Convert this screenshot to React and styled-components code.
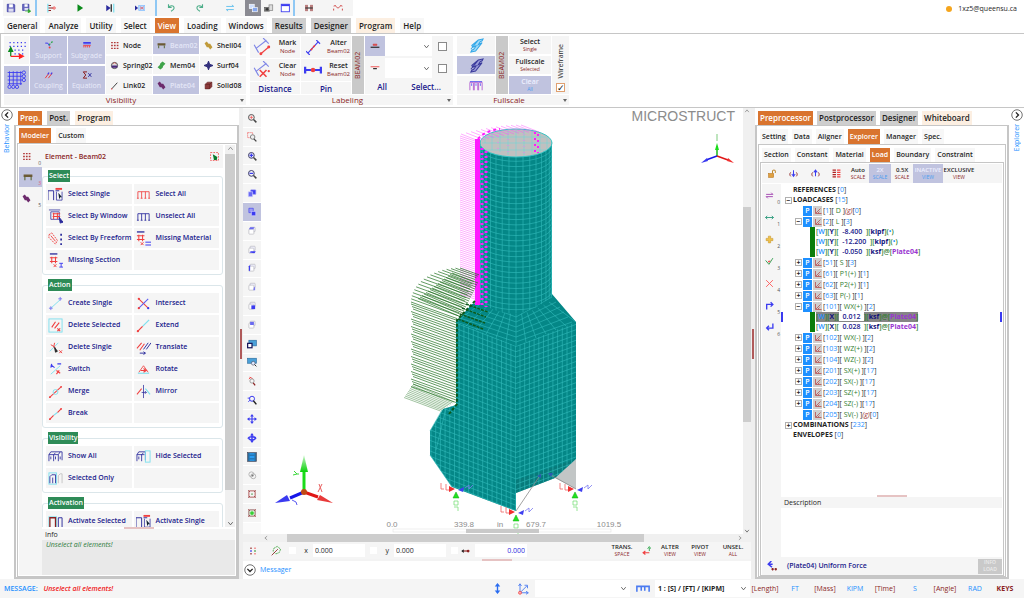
import React, { useState } from 'react'
import styled, { createGlobalStyle, css } from 'styled-components';

const GlobalStyle = createGlobalStyle`
    :root{
        --ink: #1f1f1f;
        --navy: #1a1a8c;
        --brown: #8b1f1f;
        --blue: #1e90ff;
        --orange: #d9742f;
        --lavender: #c0c3df;
        --panel: #f5f5f5;
        --line: #c6c6c6;
        --green: #2e8b57;
    }
    *{
        box-sizing: border-box;
    }
    body{
        margin: 0;
        background: #fff;
        color: var(--ink);
        font-family: "Open Sans", "Noto Sans", sans-serif;
        font-size: 7px;
        line-height: 10px;
    }
    button, input, select{
        font: inherit;
        color: inherit;
        border: 0;
        margin: 0;
        padding: 0;
        background: none;
        border-radius: 0;
        min-width: 0;
    }
    button{
        cursor: pointer;
        white-space: nowrap;
    }
    svg{
        display: block;
        flex: none;
    }
`

/* ---------- icons, all on a 16 x 16 grid ---------- */

const R = '#f04040'
const B = '#3c3cf0'
const N = '#2a2a9c'
const C = '#7fe0ee'
const D = '#8b2020'
const G = '#8a8a8a'

const pair = (back, front) => (
    <>
        <rect x="5" y="2" width="8" height="7" rx="1" fill="#f2f2ff" stroke={back} />
        <rect x="3" y="5" width="8" height="8" rx="1" fill="#fff" stroke={back} />
        {front}
    </>
)
const lens = (color = G) => (
    <>
        <circle cx="7" cy="7" r="4.6" stroke={color} strokeWidth="1.6" />
        <path d="M10.5 10.5L15 15" stroke="#444" strokeWidth="2.4" />
    </>
)

const drawings = {
    save: <><path d="M2 2H13L14 3V14H2Z" fill="#6a6ac0" stroke={N} /><rect x="5" y="2" width="6" height="5" fill="#fff" stroke="none" /><rect x="4" y="9" width="8" height="5" fill="#dcdcf0" stroke="none" /></>,
    saveAs: <><path d="M1 2H11V12H1Z" fill="#6a6ac0" stroke={N} /><rect x="4" y="2" width="5" height="4" fill="#fff" stroke="none" /><rect x="4" y="8" width="6" height="4" fill="#dcdcf0" stroke="none" /><path d="M5 13H13M10 10L14 13L10 16Z" fill="#2aa62a" stroke="#2aa62a" /></>,
    branch: <><path d="M3 1V15" stroke={C} strokeWidth="2" /><path d="M4 4H8M4 8H14M4 12H8" stroke={D} strokeWidth="1.6" /><circle cx="13" cy="8" r="2" fill="#f3b8b8" stroke={R} /></>,
    play: <path d="M4 2L13 8L4 14Z" fill="#0a8a1a" stroke="none" />,
    step: <><path d="M2 3L9 8L2 13Z" fill={N} stroke="none" /><path d="M10 2V14" stroke="#222" strokeWidth="2" /><path d="M14 1V15" stroke={C} strokeWidth="2" /></>,
    stepBox: <><path d="M0 4L5 8L0 12Z" fill={N} stroke="none" /><rect x="6" y="4" width="10" height="8" fill="#b8dcff" stroke="#79b8ff" /><path d="M8 6L14 10M14 6L8 10" stroke={R} /></>,
    undo: <path d="M4 2V7H9M4 7C7 3 13 4 13 8C13 11 10 12 8 13" stroke="#4fae8a" strokeWidth="1.8" />,
    redo: <path d="M12 2V7H7M12 7C9 3 3 4 3 8C3 11 6 12 8 13" stroke="#4fae8a" strokeWidth="1.8" />,
    swap: <path d="M2 5.5H14L11 3M14 10.5H2L5 13" stroke="#6cc4ee" strokeWidth="1.6" />,
    screens: <><rect x="2" y="2" width="8" height="7" fill="#cfe0ff" stroke="#fff" /><rect x="7" y="7" width="8" height="7" fill="#86a8f0" stroke="#fff" /></>,
    printer: <><rect x="1" y="7" width="8" height="6" fill="#777" stroke="#555" /><rect x="8" y="3" width="6" height="9" fill="#ddd" stroke="#777" /><circle cx="5" cy="10" r="2" fill="#333" stroke="none" /></>,
    windowBox: <><rect x="2" y="2" width="13" height="12" fill="#fff" stroke={B} strokeWidth="1.4" /><rect x="2" y="2" width="13" height="3" fill={B} stroke="none" /></>,
    truss: <><path d="M3 13V3M5 13V3M11 13V3M13 13V3" stroke={D} strokeWidth="1.4" /><path d="M2 8H14" stroke="#333" strokeWidth="1.8" /></>,
    hanger: <path d="M1 12V9M15 12V9M1 5L4 4M15 5L12 4M4 4C6 9 10 9 12 4" stroke="#d24b4b" strokeWidth="1.6" />,

    axisGrid: <><path d="M2 2H15M2 5H15M6 8H15M6 11H15" stroke={B} strokeDasharray="1 2" /><path d="M3 13V8M1.5 9L3 6L4.5 9Z" stroke="#0b8a1e" fill="#0b8a1e" /><path d="M3 13H11M10 11.5L13 13L10 14.500Z" stroke="#ff2020" fill="#ff2020" /></>,
    grid: <><path d="M2 1V12M5 1V12M8 1V12M11 1V12M0.5 2H12M0.5 5H12M0.5 8H12M0.5 11H12" stroke={B} strokeWidth="0.7" /><g stroke={B} strokeWidth="0.7"><circle cx="13.5" cy="2" r="1.3" /><circle cx="13.5" cy="5" r="1.3" /><circle cx="13.5" cy="8" r="1.3" /><circle cx="2" cy="13.5" r="1.3" /><circle cx="5" cy="13.5" r="1.3" /><circle cx="8" cy="13.5" r="1.3" /></g></>,
    support: <><path d="M2 5H6L9 10" stroke={B} strokeWidth="1.6" /><path d="M8 8L14 2" stroke="#2aa64a" strokeWidth="2" strokeDasharray="3 2" /><circle cx="9" cy="12" r="1.6" fill={R} stroke="none" /></>,
    subgrade: <><path d="M2 4H14M2 6H14" stroke={B} strokeWidth="1.6" /><path d="M2 9H14M3 9V12M6 9V12M9 9V12M12 9V12" stroke={R} strokeWidth="1.4" /></>,
    coupling: <><path d="M2 13L8 5M7 13L13 5" stroke={R} strokeWidth="1.6" /><path d="M6 7L8 4M11 7L13 4" stroke={B} strokeWidth="1.8" /></>,
    equation: <><path d="M8 3H2L6 8L2 13H8" stroke={D} strokeWidth="1.6" /><path d="M10 5L15 11M15 5L10 11" stroke={N} strokeWidth="1.4" /></>,
    dots: <path d="M2 3H5M7 3H10M12 3H15M2 8H5M7 8H10M12 8H15M2 13H5M7 13H10M12 13H15" stroke="#b23a3a" strokeWidth="2.4" />,
    spring: <><circle cx="8" cy="8" r="5.5" fill="#ddd" stroke="#444" strokeWidth="1.6" /><path d="M3 8H13V12H3Z" fill="#4b2a7c" stroke="none" /><path d="M5 5L8 3L11 5" stroke={R} /></>,
    link: <><path d="M3 14L13 3" stroke="#222" strokeWidth="1.5" /><circle cx="3" cy="14" r="1.2" fill={R} stroke="none" /></>,
    beam: <><rect x="1" y="4" width="14" height="4" fill="#6b5a34" stroke="none" /><path d="M3 8V13M13 8V13" stroke="#5a6a3a" strokeWidth="1.8" /></>,
    mem: <path d="M1 11L5 7L6 4L10 1L15 5L11 9L10 12L6 15Z" fill="#3fa34a" stroke="none" />,
    plate: <path d="M1 4L5 1L8 5L11 5L15 11L11 15L8 11L5 11Z" fill="#6c2a6c" stroke="none" />,
    shell: <path d="M1 4L5 1L8 5L11 5L15 11L11 15L8 11L5 11Z" fill="#c09a3a" stroke="none" />,
    surf: <path d="M8 1L10 6L15 8L10 10L8 15L6 10L1 8L6 6Z" fill="#33307c" stroke="#33307c" strokeWidth="2" />,
    solid: <><path d="M2 6L6 2H14V10L10 14H2Z" fill="#8b3a3a" stroke="#5c1d1d" /><path d="M2 6H10V14M10 6L14 2" stroke="#5c1d1d" /></>,
    mark: <><path d="M1 6L5 13M3 9L12 2M9 0L14 5" stroke="#7f86e6" /><path d="M7 14L14 8" stroke={R} /><circle cx="7" cy="14" r="1.3" fill={R} /><circle cx="14" cy="8" r="1.3" fill={R} /></>,
    clear: <><path d="M1 6L5 13M3 9L12 2M9 0L14 5" stroke="#7f86e6" /><path d="M6 8L12 14M12 8L6 14" stroke={R} strokeWidth="1.4" /><circle cx="14" cy="9" r="1" fill={R} /></>,
    alter: <><path d="M2 14L13 2M0 12L4 16M11 0L15 4" stroke={B} strokeWidth="1.2" /><path d="M5 11L10 5" stroke={R} strokeWidth="1.6" strokeDasharray="3 1" /></>,
    reset: <><path d="M0 8H16" stroke={B} strokeWidth="1.8" /><path d="M1 5V11M15 5V11" stroke={B} strokeWidth="2" /><circle cx="8" cy="8" r="2" fill={R} stroke="none" /></>,
    labelTop: <><path d="M1 10H15" stroke="#222" strokeWidth="1.8" /><path d="M5 7V5H11V7Z" fill="#d95050" stroke="#d84040" /></>,
    labelBottom: <><path d="M1 6H15" stroke={R} strokeWidth="1.4" /><path d="M5 9H11" stroke="#333" strokeWidth="2" /></>,
    steelLight: <path d="M2 12L10 2L15 1L14 3L12 4L10 7L14 5L7 14L2 15L3 13L5 12L8 8L4 10L3 8L10 2" stroke="#35a8e8" fill="#a4dcf8" strokeWidth="1.1" />,
    steel: <path d="M2 12L10 2L15 1L14 3L12 4L10 7L14 5L7 14L2 15L3 13L5 12L8 8L4 10L3 8L10 2" stroke="#3a3a9c" fill="#9a9ad8" strokeWidth="1.1" />,
    frames: <><path d="M1 14V5H5V14M6 14V5H10V14M11 14V5H15V14" stroke="#b05ad0" strokeWidth="1" /><path d="M1 4H15M3 9V6M8 9V6M13 9V6" stroke={B} strokeWidth="0.8" /></>,

    selSingle: <><path d="M0 14V4H6V14M8 4H12" stroke={N} strokeWidth="1" /><path d="M8 2H15" stroke={R} strokeWidth="2" /><path d="M9 5V14H15V5" stroke={N} strokeWidth="0.8" /><path d="M11 6L15 11H13L12 13Z" fill="#123" stroke="none" /></>,
    selAll: <path d="M2 12V5H14V12M6 12V5M10 12V5M1 12H3M5 12H7M9 12H11M13 12H15" stroke={R} strokeWidth="0.9" />,
    unselAll: <path d="M2 12V5H14V12M6 12V5M10 12V5M1 12H3M5 12H7M9 12H11M13 12H15" stroke={N} strokeWidth="0.9" />,
    selWindow: <><path d="M1 1H13M3 3V11H12V3Z" stroke={N} strokeWidth="0.8" /><path d="M5 5H13M5 8H13M6 4V11M10 4V11" stroke={R} strokeWidth="1.1" /><path d="M12 9L16 14L13 15Z" fill={N} stroke={N} /></>,
    selFree: <><path d="M1 4L4 2L10 10L8 14L1 7Z" stroke={R} strokeDasharray="2 1" /><path d="M3 5L8 11" stroke={R} /><path d="M14 3V5M14 8V10M14 13V15" stroke={N} strokeWidth="1.8" /></>,
    missSection: <><path d="M2 1H10" stroke={N} strokeWidth="1.4" /><path d="M2 5H10M2 9H10M4 4V11M8 4V11" stroke={R} strokeWidth="1.1" /><path d="M6 12L9 15M9 12L6 15" stroke={R} /><path d="M12 11H16M14 11V15M12 15H16" stroke={B} /></>,
    missMaterial: <><path d="M1 1H9" stroke={N} strokeWidth="1.4" /><path d="M1 5H9M1 9H9M3 4V11M7 4V11" stroke={R} strokeWidth="1.1" /><path d="M5 12L8 15M8 12L5 15" stroke={R} /><path d="M10 12H16M10 15H16" stroke="#7a7af4" strokeWidth="1.6" /></>,
    createSingle: <><path d="M3 13L13 4" stroke={C} /><path d="M3 11V15M1 13H5M13 1V5M11 3H15" stroke="#7a7af0" /></>,
    intersect: <><path d="M3 3L13 13" stroke={R} strokeWidth="1.1" /><path d="M13 3L3 13" stroke="#5a5af0" strokeWidth="1.1" /><circle cx="3" cy="3" r="1.2" fill={R} stroke="none" /><circle cx="3" cy="13" r="1.2" fill={R} stroke="none" /><circle cx="13" cy="13" r="1.2" fill={B} stroke="none" /></>,
    delSelected: <><rect x="1" y="1" width="14" height="14" stroke={C} /><path d="M4 10L8 4M7 11L12 5M10 11L13 14M13 11L10 14" stroke={R} strokeWidth="1.2" /></>,
    extend: <><path d="M7 9L14 2" stroke={C} strokeWidth="1.3" /><path d="M2 14L7 9" stroke={R} strokeWidth="1.3" /><circle cx="2" cy="14" r="1.2" fill={R} stroke="none" /></>,
    delSingle: <><path d="M2 12L11 3" stroke={C} /><path d="M3 5L8 8M7 3L6 8" stroke={R} /><path d="M7 8L10 12L8 13Z" fill="#222" stroke="#222" /><path d="M12 11L15 14M15 11L12 14" stroke={R} /></>,
    translate: <><path d="M1 9L6 3M4 11L9 4" stroke={R} strokeWidth="1.1" /><path d="M8 10L13 3M11 10L16 3M4 14H10M8 12.500L10 14L8 15.500" stroke={N} strokeWidth="1" /></>,
    switchIt: <><path d="M3 13L13 4" stroke={C} /><path d="M3 3L7 6M4 2L3 6M10 2L14 2" stroke={B} strokeWidth="1.2" /><path d="M9 9L13 12M12 9L9 13" stroke={R} strokeWidth="1.2" /></>,
    rotate: <><path d="M3 11L8 4L13 11" stroke={R} strokeWidth="0.9" /><path d="M2 12H14" stroke={C} strokeWidth="1.2" /><path d="M5 9H10M8 7L11 9L8 11" stroke={R} strokeWidth="1.2" /></>,
    merge: <><path d="M2 14L14 3" stroke={R} strokeWidth="1.1" /><circle cx="8" cy="8.5" r="2.6" stroke={C} /><circle cx="2" cy="14" r="1" fill={R} stroke="none" /><circle cx="14" cy="3" r="1" fill={R} stroke="none" /></>,
    mirror: <><path d="M1 11L6 5" stroke={R} strokeWidth="1.1" /><path d="M8 1V15M6 9H11M9.500 7.500L11 9L9.500 10.500" stroke={N} strokeWidth="0.8" /><path d="M10 5L15 11" stroke={C} strokeWidth="1.2" /></>,
    breakIt: <><path d="M2 14L6 10M10 7L14 3" stroke={R} strokeWidth="1.3" /><path d="M6 10L10 7" stroke={C} strokeWidth="1.3" /><circle cx="2" cy="14" r="1" fill={R} stroke="none" /><circle cx="14" cy="3" r="1" fill={R} stroke="none" /></>,
    showAll: <path d="M1 13V6L3 3H15V12M6 13V6L8 4M11 13V6L13 3M1 6H6M6 6H11M3 8V11M8 8V11M13 8V11" stroke={N} strokeWidth="0.9" />,
    hideSel: <><path d="M1 13V6L3 3H10V12M6 13V6L8 4M1 6H9M3 8V11" stroke={N} strokeWidth="0.9" /><rect x="10" y="2" width="5" height="12" stroke={C} /></>,
    selOnly: <><rect x="1" y="2" width="8" height="12" stroke={C} /><path d="M2 13V6L4 4H8V13M5 13V7" stroke={N} strokeWidth="0.9" /><path d="M11 13V5L13 3H15V13" stroke="#c4c4c4" /></>,
    activate: <><rect x="1" y="3" width="8" height="12" stroke={C} /><path d="M2 14V4H8V14" stroke={D} strokeWidth="1.4" /><path d="M11 14V4H15V14" stroke={N} /></>,
    pickBox: <><rect x="1" y="1" width="14" height="14" stroke={R} strokeDasharray="3 2" strokeWidth="1.4" /><path d="M5 4L13 9L12 14H7Z" fill="#0a7a2a" stroke="none" /></>,

    zoomFit: <>{lens('#555')}<path d="M4 7H10M7 4V10" stroke={R} /></>,
    zoomArea: <><rect x="1" y="1" width="8" height="8" stroke={R} strokeDasharray="2 1" /><circle cx="9" cy="8" r="3.6" fill="#eee" stroke="#777" strokeWidth="1.4" /><path d="M11 11L15 15" stroke="#444" strokeWidth="2.2" /></>,
    zoomIn: <>{lens('#3b3b6a')}<path d="M4 7H10M7 4V10" stroke={B} strokeWidth="2" /></>,
    zoomOut: <>{lens('#3b3b6a')}<path d="M4 7H10" stroke={B} strokeWidth="2" /></>,
    cube: <><path d="M6 3H14V10H6Z" fill={B} stroke="#8a8af0" /><path d="M2 6H9V14H2Z" fill="#6a6af4" stroke="#dcdcff" /></>,
    cubeActive: <><path d="M3 2H10V9H3Z" fill="#9a9af4" stroke={B} /><path d="M7 7H14V14H7Z" fill={B} stroke="#dcdcff" /></>,
    cubeTop: pair('#b0b0b8', <path d="M3 5L5 2H12L10 5Z" fill="#6a6af0" stroke="none" />),
    cubeBottom: pair('#b0b0b8', <path d="M4 12L6 10H14L12 13Z" fill={B} stroke="none" />),
    cubeLeft: pair('#b0b0b8', <path d="M3 5L5 3V12L3 13Z" fill={B} stroke="none" />),
    cubeRight: pair('#b0b0b8', <path d="M11 9L13 7V13H10Z" fill="#7a7af0" stroke="none" />),
    cubeFront: pair('#b0b0b8', <rect x="7" y="7" width="6" height="6" fill={B} stroke="none" />),
    cubeBack: pair('#b0b0b8', <rect x="5" y="3" width="6" height="5" fill="#6a6af0" stroke="none" />),
    viewSave: <><rect x="3" y="2" width="12" height="9" fill="#4aa0d8" stroke="#2a6a9c" /><rect x="1" y="7" width="7" height="7" fill="#fff" stroke="#1a1a5c" strokeWidth="2" /></>,
    viewFind: <><rect x="1" y="2" width="14" height="8" fill="#4aa0d8" stroke="#2a6a9c" /><circle cx="10" cy="10" r="3" fill="#dfe9ff" stroke="#556" /><path d="M12 12L15 15" stroke="#333" strokeWidth="1.6" /></>,
    search: <><path d="M4 2L9 4M3 5L6 2" stroke={R} strokeWidth="1.4" /><circle cx="8" cy="8" r="3.4" stroke="#888" strokeWidth="1.2" /><path d="M10 11L13 15" stroke={D} strokeWidth="2" /></>,
    zoomDyn: <><circle cx="8" cy="6" r="4" stroke={B} strokeWidth="1.6" /><path d="M1 5H5M2 11L5 8" stroke={B} strokeWidth="1.4" /><path d="M10 9L15 15" stroke="#222" strokeWidth="2.4" /></>,
    pan: <><path d="M8 2V14M2 8H14" stroke={B} strokeWidth="1.8" /><path d="M8 0L11 4H5ZM8 16L5 12H11ZM0 8L4 5V11ZM16 8L12 11V5Z" fill={B} stroke="none" /></>,
    orbit: <><path d="M8 0L11 4H5ZM8 16L5 12H11Z" fill={B} stroke="none" /><path d="M8 2V14" stroke={B} strokeWidth="2.4" /><path d="M2 9C2 5 14 5 14 9M14 8C12 12 5 12 3 9" stroke={B} strokeWidth="2.6" /></>,
    film: <><rect x="1" y="1" width="14" height="14" fill="#2a6c9c" stroke="#445" /><rect x="4" y="2" width="8" height="12" fill="#2a9af0" stroke="none" /><path d="M4 5H12M4 11H12" stroke="#1f5c8c" strokeWidth="1.4" /></>,
    rings: <><circle cx="7" cy="7" r="4" stroke="#b0b0b0" strokeWidth="1.4" /><circle cx="10" cy="10" r="4" stroke="#b0b0b0" strokeWidth="1.4" /><circle cx="8.5" cy="8.5" r="1.5" fill="#777" stroke="none" /></>,
    nodeRing: <><path d="M5 3H11L13 5V11L11 13H5L3 11V5Z" stroke="#9c2a2a" strokeWidth="1.2" /><path d="M2 3H4M12 3H14M2 13H4M12 13H14" stroke={D} strokeWidth="2" /><circle cx="8" cy="8" r="1.4" fill="#6cac6c" stroke="none" /></>,
    nodeRingOn: <><path d="M5 3H11L13 5V11L11 13H5L3 11V5Z" fill="#dff5df" stroke="#7a3a3a" strokeWidth="1.2" /><path d="M2 3H4M12 3H14M2 13H4M12 13H14" stroke={D} strokeWidth="2" /><circle cx="8" cy="8" r="3" fill="#35d035" stroke="none" /></>,

    lock: <><rect x="1" y="8" width="9" height="7" fill="#e0a040" stroke="#b87820" /><path d="M8 8V4C8 1 13 1 13 4V7" stroke="#c08a30" strokeWidth="1.8" /></>,
    down: <><path d="M8 2V12M5 9L8 13L11 9" stroke={B} strokeWidth="1.8" /><path d="M3 6C1 8 1 11 3 13M13 6C15 8 15 11 13 13" stroke={D} strokeWidth="1.6" /></>,
    up: <><path d="M8 13V3M5 6L8 2L11 6" stroke={B} strokeWidth="1.8" /><path d="M3 6C1 8 1 11 3 13M13 6C15 8 15 11 13 13" stroke={D} strokeWidth="1.6" /></>,
    list: <><path d="M1 2H7M1 6H7M1 10H7M1 14H7" stroke="#b02020" strokeWidth="2.2" /><path d="M9 2H15M9 6H15M9 10H15M9 14H15" stroke={R} strokeWidth="2.2" /></>,
    exchange: <path d="M2 6H14L11 3M14 10H2L5 13" stroke="#a040b0" strokeWidth="1.6" />,
    stretch: <path d="M1 8H15M4 5L1 8L4 11M12 5L15 8L12 11" stroke="#2a9a7a" strokeWidth="1.6" />,
    plus: <path d="M6 2H10V6H14V10H10V14H6V10H2V6H6Z" fill="#efc24a" stroke="#c8962a" />,
    pencil: <><path d="M1 6L7 13L14 2" stroke="#2a9a4a" strokeWidth="1.6" /><path d="M5 7L10 6L7 10Z" fill={R} stroke="none" /></>,
    cross: <path d="M2 2L14 14M14 2L2 14" stroke="#ff5a5a" strokeWidth="1.6" />,
    turnUp: <path d="M3 15V6H13M10 2L14 6L10 10" stroke={B} strokeWidth="2.4" />,
    turnDown: <path d="M14 1V9H4M7 5L3 9L7 13" stroke={B} strokeWidth="2.4" />,
    chart: <path d="M3 2V13H15M4 12L8 8L13 3M8 12L11 9" stroke="#b03030" strokeWidth="1.3" />,
    force: <><path d="M7 0L2 5L8 10M2 5H9" stroke={B} strokeWidth="2.4" /><path d="M7 13H11M9 11V15M12 13H16M14 11V15" stroke={D} strokeWidth="1.8" /></>,
    spread: <><path d="M8 3V13" stroke="#2a6cf0" strokeWidth="2" /><path d="M8 0L12 5H4ZM8 16L4 11H12Z" fill="#2a6cf0" stroke="none" /></>,
    ucs: <><path d="M4 2V13H15M4 13L13 4M2 4L4 1L6 4M12 11L15 13L12 15M10 3L14 3V7" stroke="#4a7af0" strokeWidth="1.2" /><circle cx="4" cy="13" r="2" fill="#ffb0b0" stroke={R} /></>,
    ruler: <path d="M1 11V5H15V11M6 5V10M10 5V10" stroke="#4a7af0" strokeWidth="1.8" />,
    dofs: <><path d="M4 1V4M4 12V15" stroke={D} strokeWidth="2.4" /><path d="M4 6V10" stroke={B} strokeWidth="2.4" /><path d="M12 1V4M12 12V15" stroke="#f06060" strokeWidth="2.4" /><path d="M12 6V10" stroke="#4aa04a" strokeWidth="2.4" /></>,
    snap: <><path d="M4 5L9 2L14 6L12 11L7 13L3 9Z" stroke="#5ab05a" strokeDasharray="3 1" strokeWidth="1.4" /><path d="M1 15L10 6" stroke={D} strokeWidth="1.2" /></>,
    nodeArrow: <><path d="M4 8H12" stroke={D} strokeWidth="1.8" /><path d="M6 5L2 8L6 11Z" fill="#222" stroke="none" /><circle cx="13" cy="8" r="2.2" fill={D} stroke="none" /></>,
    bend: <><path d="M13 3V9M10 5L13 1L16 5" stroke="#2aa64a" strokeWidth="1.6" /><path d="M13 12H3M6 9L2 12L6 15" stroke={R} strokeWidth="2" /></>,
    caretDown: <path d="M3 5L8 11L13 5" stroke="#555" strokeWidth="2" />,
    caretUp: <path d="M3 11L8 5L13 11" stroke="#888" strokeWidth="2" />,
    caretLeft: <path d="M11 3L5 8L11 13" stroke="#888" strokeWidth="2" />,
    caretRight: <path d="M5 3L11 8L5 13" stroke="#888" strokeWidth="2" />,
    ringLeft: <><circle cx="8" cy="8" r="7" fill="#fff" stroke="#444" /><path d="M9.500 4.500L6 8L9.500 11.500" stroke="#222" strokeWidth="1.8" /></>,
    ringRight: <><circle cx="8" cy="8" r="7" fill="#fff" stroke="#444" /><path d="M6.500 4.500L10 8L6.500 11.500" stroke="#222" strokeWidth="1.8" /></>,
    ringDown: <><circle cx="8" cy="8" r="7" fill="#fff" stroke="#444" /><path d="M4.500 6.500L8 10L11.500 6.500" stroke="#222" strokeWidth="1.8" /></>,
}

const Icon = ({ name, size = 11 }) => (
    <svg width={size} height={size} viewBox="0 0 16 16" fill="none" aria-hidden="true">
        {drawings[name]}
    </svg>
)

/* ---------- shared parts ---------- */

const PageStyled = styled.div`
    display: flex;
    flex-direction: column;
    height: 100vh;
    min-height: 480px;
`

const tabColors = {
    on: css`background: var(--orange); color: #fff;`,
    grey: css`background: #cecece;`,
    cream: css`background: #fcefe2;`,
    plain: css`background: #f7f7f7;`,
}

const TabsStyled = styled.nav`
    display: flex;
    gap: ${p => p.$gap || 4}px;
    padding: ${p => p.$pad || '0'};
    flex: none;
`

const TabButton = styled.button`
    height: ${p => p.$tall ? 15 : 14}px;
    padding: 0 ${p => p.$wide ? 3 : 2}px;
    font-size: ${p => p.$small ? 7 : 8}px;
    line-height: 14px;
    font-weight: 600;
    ${p => tabColors[p.$kind || 'plain']}
`

const Tabs = ({ items, gap, pad, wide, tall, small }) => (
    <TabsStyled $gap={gap} $pad={pad}>
        {items.map(([label, kind]) => (
            <TabButton key={label} $kind={kind} $wide={wide} $tall={tall} $small={small}>{label}</TabButton>
        ))}
    </TabsStyled>
)

const Thumb = styled.div`
    background: #cdcdcd;
    flex: ${p => p.$grow} 1 0;
`
const TrackSpace = styled.div`
    flex: ${p => p.$grow} 1 0;
`
const ScrollTrack = styled.div`
    display: flex;
    flex-direction: ${p => p.$row ? 'row' : 'column'};
    align-items: stretch;
    flex: none;
    background: #f0f0f0;
    ${p => p.$row ? 'height: 8px;' : `width: ${p.$width || 8}px;`}
    svg{
        align-self: center;
    }
`
const Handle = styled.div`
    background: ${p => p.$pale ? '#e6c3c3' : '#b05a5a'};
    width: ${p => p.$upright ? 2 : 30}px;
    height: ${p => p.$upright ? 30 : 2}px;
    flex: none;
    align-self: center;
`

const SelectWrap = styled.span`
    display: grid;
    grid-template-columns: 1fr ${p => p.$caret || 14}px;
    align-items: center;
    justify-items: center;
    background: #fff;
    width: ${p => p.$width}px;
    height: ${p => p.$height}px;
    select{
        appearance: none;
        grid-area: 1 / 1 / 2 / 3;
        width: 100%;
        height: 100%;
        padding-left: 3px;
        font-size: 7px;
        font-weight: 700;
    }
    svg{
        grid-area: 1 / 2;
        pointer-events: none;
    }
`
const DropDown = ({ label, width, height, caret, options = [''] }) => (
    <SelectWrap $width={width} $height={height} $caret={caret}>
        <select aria-label={label}>
            {options.map(o => <option key={o}>{o}</option>)}
        </select>
        <Icon name="caretDown" size={7} />
    </SelectWrap>
)

const TickBox = styled.input.attrs({ type: 'checkbox' })`
    appearance: none;
    width: ${p => p.$plain ? 7 : 9}px;
    height: ${p => p.$plain ? 7 : 9}px;
    background: #fff;
    border: ${p => p.$plain ? '0' : '1px solid #8a8a8a'};
    display: grid;
    place-items: center;
    flex: none;
    &:checked{
        border-color: #e0a070;
    }
    &:checked::after{
        content: "✓";
        font: 700 9px/9px "DejaVu Sans", sans-serif;
        color: #111;
    }
`

const Stacked = styled.button`
    display: flex;
    flex-direction: column;
    align-items: center;
    justify-content: center;
    width: ${p => p.$width}px;
    font-size: ${p => p.$large ? 7 : 6}px;
    line-height: ${p => p.$large ? 8 : 7}px;
    font-weight: 600;
    background: ${p => p.$on ? 'var(--lavender)' : 'var(--panel)'};
    color: ${p => p.$on ? '#eef0ff' : 'var(--ink)'};
    small{
        font-size: 5px;
        line-height: 7px;
        font-weight: 400;
        color: ${p => p.$on ? '#4a9cf0' : 'var(--brown)'};
    }
`

/* ---------- top bars ---------- */

const QuickBar = styled.header`
    display: flex;
    align-items: stretch;
    height: 17px;
    flex: none;
    padding-left: 3px;
`
const QuickButton = styled.button`
    display: grid;
    place-items: center;
    width: ${p => p.$slim ? 16 : 30}px;
    margin-bottom: 1px;
    background: ${p => p.$on ? '#8b8b93' : 'var(--panel)'};
    border-left: ${p => p.$rule ? '2px solid #8fc8f4' : '0'};
`
const Account = styled.span`
    display: flex;
    align-items: center;
    gap: 6px;
    margin-left: auto;
    padding-right: 7px;
    font-size: 7px;
    &::before{
        content: "";
        width: 6px;
        height: 6px;
        border-radius: 50%;
        background: #f5a51d;
    }
`

const quickItems = [
    ['save', 1], ['saveAs', 1], ['branch', 0, 1], ['play'], ['step'], ['stepBox'],
    ['undo', 0, 1], ['redo'], ['swap'], ['screens', 1, 0, 1], ['printer', 1], ['windowBox', 1],
    ['truss', 0, 1], ['hanger'],
]

const menuItems = [
    ['General'], ['Analyze'], ['Utility'], ['Select'], ['View', 'on'], ['Loading'], ['Windows'],
    ['Results', 'grey'], ['Designer', 'grey'], ['Program', 'cream'], ['Help'],
]

/* ---------- ribbon ---------- */

const RibbonStyled = styled.section`
    display: flex;
    gap: 4px;
    padding: 2px 3px 1px;
    border: 1px solid var(--line);
    border-width: 1px 0 1px 1px;
    height: 75px;
    flex: none;
`
const RibbonGroup = styled.div`
    display: flex;
    flex-direction: column;
    gap: 1px;
`
const RibbonBody = styled.div`
    display: flex;
    gap: 1px;
    height: 58px;
    flex: none;
`
const RibbonTitle = styled.div`
    display: grid;
    grid-template-columns: 1fr 8px;
    justify-items: center;
    align-items: center;
    background: var(--panel);
    color: var(--brown);
    font-size: 8px;
    line-height: 10px;
    &::after{
        content: "";
        border: 2px solid transparent;
        border-top: 3px solid #666;
        border-bottom: 0;
    }
`
const Stack = styled.div`
    display: grid;
    grid-template-rows: ${p => p.$rows || '1fr 1fr'};
    gap: ${p => p.$gap || 2}px;
    width: ${p => p.$width}px;
`
const TileButton = styled.button`
    display: flex;
    flex-direction: column;
    align-items: center;
    justify-content: center;
    gap: 1px;
    background: ${p => p.$on ? 'var(--lavender)' : 'var(--panel)'};
    color: #e9ebfa;
    font-size: 7px;
    line-height: 9px;
`
const KindButton = styled.button`
    display: flex;
    align-items: center;
    gap: 4px;
    padding-left: 4px;
    font-size: 7px;
    line-height: 9px;
    font-weight: 600;
    background: ${p => p.$on ? 'var(--lavender)' : 'var(--panel)'};
    color: ${p => p.$on ? '#e4e6f7' : 'var(--ink)'};
`
const ActionButton = styled.button`
    display: grid;
    grid-template-columns: 18px 1fr;
    align-items: center;
    justify-items: center;
    column-gap: 4px;
    padding-left: 3px;
    background: var(--panel);
    text-align: center;
    font-size: 7px;
    line-height: 8px;
    font-weight: 600;
    small{
        display: block;
        font-size: 6px;
        font-weight: 400;
        color: var(--brown);
    }
`
const NavyLabel = styled.span`
    color: var(--navy);
    font-size: 8px;
    line-height: 13px;
    font-weight: 600;
    text-align: center;
    background: var(--panel);
`
const Upright = styled.span`
    writing-mode: vertical-rl;
    transform: rotate(180deg);
    text-align: center;
    width: 12px;
    line-height: 12px;
    font-size: 7px;
    background: ${p => p.$light ? 'transparent' : '#c9c9c9'};
    color: ${p => p.$light ? 'var(--ink)' : 'var(--brown)'};
`
const LabelGrid = styled.div`
    display: grid;
    grid-template-columns: 20px 47px 21px;
    grid-template-rows: 20px 20px 14px;
    row-gap: 2px;
    place-items: stretch;
    background: var(--panel);
    label, input{
        place-self: center;
    }
`
const BottomLabels = styled.div`
    grid-column: span 3;
    display: flex;
    justify-content: space-around;
`
const WireframeLabel = styled.label`
    display: flex;
    flex-direction: column;
    align-items: center;
    justify-content: flex-end;
    gap: 4px;
    width: 17px;
    background: var(--panel);
    padding-bottom: 2px;
`

const kinds = [
    [['dots', 'Node'], ['spring', 'Spring02'], ['link', 'Link02']],
    [['beam', 'Beam02', 1], ['mem', 'Mem04'], ['plate', 'Plate04', 1]],
    [['shell', 'Shell04'], ['surf', 'Surf04'], ['solid', 'Solid08']],
]

const Ribbon = () => (
    <RibbonStyled>
        <RibbonGroup>
            <RibbonBody>
                <Stack $width={25}>
                    <TileButton aria-label="Axis grid"><Icon name="axisGrid" size={20} /></TileButton>
                    <TileButton aria-label="Grid" $on><Icon name="grid" size={20} /></TileButton>
                </Stack>
                <Stack $width={37}>
                    <TileButton $on><Icon name="support" size={10} />Support</TileButton>
                    <TileButton $on><Icon name="coupling" size={10} />Coupling</TileButton>
                </Stack>
                <Stack $width={37}>
                    <TileButton $on><Icon name="subgrade" size={10} />Subgrade</TileButton>
                    <TileButton $on><Icon name="equation" size={10} />Equation</TileButton>
                </Stack>
                {kinds.map((column, i) => (
                    <Stack key={i} $width={46} $rows="1fr 1fr 1fr">
                        {column.map(([icon, label, on]) => (
                            <KindButton key={label} $on={on}><Icon name={icon} size={9} />{label}</KindButton>
                        ))}
                    </Stack>
                ))}
            </RibbonBody>
            <RibbonTitle>Visibility</RibbonTitle>
        </RibbonGroup>
        <RibbonGroup>
            <RibbonBody>
                <Stack $width={50} $rows="1fr 1fr 12px" $gap={1}>
                    <ActionButton><Icon name="mark" size={18} /><span>Mark<small>Node</small></span></ActionButton>
                    <ActionButton><Icon name="clear" size={18} /><span>Clear<small>Node</small></span></ActionButton>
                    <NavyLabel>Distance</NavyLabel>
                </Stack>
                <Stack $width={50} $rows="1fr 1fr 12px" $gap={1}>
                    <ActionButton><Icon name="alter" size={15} /><span>Alter<small>Beam02</small></span></ActionButton>
                    <ActionButton><Icon name="reset" size={18} /><span>Reset<small>Beam02</small></span></ActionButton>
                    <NavyLabel>Pin</NavyLabel>
                </Stack>
                <Upright>BEAM02</Upright>
                <LabelGrid>
                    <TileButton $on aria-label="Label above"><Icon name="labelTop" size={10} /></TileButton>
                    <DropDown label="Label above value" width={47} height={20} caret={11} />
                    <TickBox aria-label="Show label above" />
                    <TileButton aria-label="Label below"><Icon name="labelBottom" size={10} /></TileButton>
                    <DropDown label="Label below value" width={47} height={20} caret={11} />
                    <TickBox aria-label="Show label below" />
                    <BottomLabels><NavyLabel>All</NavyLabel><NavyLabel>Select...</NavyLabel></BottomLabels>
                </LabelGrid>
            </RibbonBody>
            <RibbonTitle>Labeling</RibbonTitle>
        </RibbonGroup>
        <RibbonGroup>
            <RibbonBody>
                <Stack $width={38} $rows="1fr 1fr 1fr">
                    <TileButton aria-label="Light section"><Icon name="steelLight" size={15} /></TileButton>
                    <TileButton $on aria-label="Section"><Icon name="steel" size={15} /></TileButton>
                    <TileButton aria-label="Frames"><Icon name="frames" size={14} /></TileButton>
                </Stack>
                <Upright>BEAM02</Upright>
                <Stack $width={42} $rows="1fr 1fr 1fr">
                    <Stacked $large>Select<small>Single</small></Stacked>
                    <Stacked $large>Fullscale<small>Selected</small></Stacked>
                    <Stacked $large $on>Clear<small>All</small></Stacked>
                </Stack>
                <WireframeLabel>
                    <Upright $light>Wireframe</Upright>
                    <TickBox defaultChecked />
                </WireframeLabel>
            </RibbonBody>
            <RibbonTitle>Fullscale</RibbonTitle>
        </RibbonGroup>
    </RibbonStyled>
)

/* ---------- left panel ---------- */

const MainStyled = styled.main`
    display: flex;
    flex: 1 1 0;
    min-height: 0;
`
const Rail = styled.aside`
    display: flex;
    flex-direction: column;
    align-items: center;
    gap: 2px;
    width: ${p => p.$right ? 15 : 14}px;
    flex: none;
    padding-top: 1px;
    span{
        writing-mode: vertical-rl;
        transform: rotate(180deg);
        color: var(--blue);
        line-height: 10px;
        padding-bottom: 1px;
    }
`
const SidePanel = styled.section`
    display: flex;
    flex-direction: column;
    width: ${p => p.$width}px;
    flex: none;
    padding-top: 3px;
`
const Frame = styled.div`
    display: flex;
    flex-direction: column;
    flex: 1;
    min-height: 0;
    border: 1px solid var(--line);
    padding: ${p => p.$pad || '2px'};
    ${p => p.$outer && css`
        border-width: 1px 2px 2px;
    `}
`
const Split = styled.div`
    display: flex;
    flex: 1;
    min-height: 0;
`
const Strip = styled.div`
    display: flex;
    flex-direction: column;
    width: ${p => p.$width}px;
    flex: none;
    background: var(--panel);
`
const StripButton = styled.button`
    display: flex;
    align-items: center;
    justify-content: space-between;
    height: ${p => p.$tall ? 20 : 22}px;
    flex: none;
    padding: 0 1px 0 ${p => p.$tall ? 4 : 3}px;
    background: ${p => p.$on ? 'var(--lavender)' : 'transparent'};
    small{
        align-self: flex-end;
        font-size: 5px;
        line-height: 7px;
        color: ${p => p.$on ? '#e06080' : '#555'};
    }
`
const Column = styled.div`
    display: flex;
    flex-direction: column;
    flex: 1;
    min-width: 0;
    min-height: 0;
`
const ScrollArea = styled.div`
    flex: 1;
    min-width: 0;
    overflow: hidden;
    padding-right: 2px;
`
const ElementHeader = styled.div`
    display: flex;
    align-items: center;
    justify-content: space-between;
    height: 23px;
    padding: 0 4px 0 3px;
    margin-bottom: 2px;
    background: var(--panel);
    color: var(--brown);
    font-weight: 600;
`
const ToolSet = styled.fieldset`
    margin: 0 0 4px;
    padding: 2px 3px 4px;
    min-width: 0;
    border: 1px solid #dbe6ea;
    border-radius: 3px;
    legend{
        margin-left: 2px;
        padding: 0 1px;
        font-size: 7px;
        line-height: 12px;
        font-weight: 600;
        color: #fff;
        background: var(--green);
    }
`
const ToolGrid = styled.div`
    display: grid;
    grid-template-columns: 1fr 1fr;
    grid-auto-rows: 20px;
    gap: 2px;
`
const ToolButton = styled.button`
    display: grid;
    grid-template-columns: 16px 1fr;
    column-gap: 4px;
    align-items: center;
    padding-left: 2px;
    text-align: left;
    background: var(--panel);
    color: var(--navy);
    font-weight: 600;
`
const Blank = styled.div`
    background: var(--panel);
`
const InfoLabel = styled.h3`
    margin: 0;
    padding-left: 3px;
    font-size: 7px;
    line-height: 11px;
    font-weight: 400;
    background: var(--panel);
`
const InfoText = styled.p`
    margin: 0;
    height: 35px;
    flex: none;
    padding-left: 4px;
    font-style: italic;
    line-height: 9px;
    color: #2a7a3a;
    background: #e9e9e9;
`

const toolSets = [
    ['Select', [
        ['selSingle', 'Select Single'], ['selAll', 'Select All'],
        ['selWindow', 'Select By Window'], ['unselAll', 'Unselect All'],
        ['selFree', 'Select By Freeform'], ['missMaterial', 'Missing Material'],
        ['missSection', 'Missing Section'], null,
    ]],
    ['Action', [
        ['createSingle', 'Create Single'], ['intersect', 'Intersect'],
        ['delSelected', 'Delete Selected'], ['extend', 'Extend'],
        ['delSingle', 'Delete Single'], ['translate', 'Translate'],
        ['switchIt', 'Switch'], ['rotate', 'Rotate'],
        ['merge', 'Merge'], ['mirror', 'Mirror'],
        ['breakIt', 'Break'], null,
    ]],
    ['Visibility', [
        ['showAll', 'Show All'], ['hideSel', 'Hide Selected'],
        ['selOnly', 'Selected Only'], null,
    ]],
    ['Activation', [
        ['activate', 'Activate Selected'], ['selSingle', 'Activate Single'],
    ]],
]

const ModelerPanel = () => (
    <SidePanel $width={225}>
        <Tabs items={[['Prep.', 'on'], ['Post.', 'grey'], ['Program', 'cream']]} gap={5} pad="0 4px" />
        <Frame $outer $pad="2px 0 0 1px">
            <Tabs small items={[['Modeler', 'on'], ['Custom']]} gap={5} pad="0 2px" tall />
            <Frame $pad="1px">
                <Split>
                    <Strip $width={23}>
                        <StripButton aria-label="Nodes"><Icon name="dots" size={9} /><small>0</small></StripButton>
                        <StripButton aria-label="Beams" $tall $on><Icon name="beam" size={10} /><small>3</small></StripButton>
                        <StripButton aria-label="Plates"><Icon name="plate" size={9} /><small>5</small></StripButton>
                    </Strip>
                    <Column>
                        <Split>
                            <ScrollArea>
                                <ElementHeader>Element - Beam02<Icon name="pickBox" size={9} /></ElementHeader>
                                {toolSets.map(([title, tools]) => (
                                    <ToolSet key={title}>
                                        <legend>{title}</legend>
                                        <ToolGrid>
                                            {tools.map((tool, i) => tool
                                                ? <ToolButton key={i}><Icon name={tool[0]} size={15} />{tool[1]}</ToolButton>
                                                : <Blank key={i} />
                                            )}
                                        </ToolGrid>
                                    </ToolSet>
                                ))}
                            </ScrollArea>
                            <ScrollTrack $width={10}>
                                <Icon name="caretUp" size={7} />
                                <TrackSpace $grow={2} />
                                <Thumb $grow={332} />
                                <TrackSpace $grow={30} />
                                <Icon name="caretDown" size={7} />
                            </ScrollTrack>
                        </Split>
                        <Handle $pale />
                        <InfoLabel>Info</InfoLabel>
                        <InfoText>Unselect all elements!</InfoText>
                    </Column>
                </Split>
            </Frame>
        </Frame>
    </SidePanel>
)

/* ---------- model view ---------- */

const body = 'M480 142V302L472 304L456 322V405L443 409L430 431V455L452 487L516 511V493L555 478L576 459V322L552 294V142Z'

const range = n => Array.from({ length: n }, (_, i) => i)

const Mesh = () => (
    <g stroke="#34bcbc" strokeWidth="0.6" fill="none">
        <g clipPath="url(#tower)">
            {range(17).map(i => {
                const x = 516 - 36 * Math.cos(Math.PI * i / 16)
                return <path key={i} d={`M${x} 140V330`} />
            })}
            {range(32).map(i => (
                <path key={i} d={`M480 ${142 + i * 5.300}A36 14 0 0 0 552 ${142 + i * 5.300}`} />
            ))}
        </g>
        <g clipPath="url(#leftFace)">
            {range(19).map(i => <path key={i} d={`M${431 + i * 4.700} 300V515`} />)}
            {range(47).map(i => <path key={i} d={`M428 ${270 + i * 5.300}L516 ${304 + i * 5.300}`} />)}
        </g>
        <g clipPath="url(#rightFace)">
            {range(13).map(i => <path key={i} d={`M${520 + i * 4.700} 300V500`} />)}
            {range(38).map(i => <path key={i} d={`M516 ${304 + i * 5.300}L576 ${282 + i * 5.300}`} />)}
        </g>
        <g clipPath="url(#shoulder)">
            {range(13).map(i => (
                <path key={i} d={`M${483 + i * 5.500} ${302 + Math.sin(Math.PI * i / 12) * 12}L${456 + i * 10} ${322 + 24 * (1 - Math.abs(i - 6) / 6)}`} />
            ))}
            {range(6).map(i => (
                <path key={i} d={`M${476 - i * 4} ${302 + i * 4}L516 ${317 + i * 5}L${552 + i * 4} ${297 + i * 5}`} />
            ))}
        </g>
        <path d="M442 410L430 431M446 408L436 450M430 455L452 487" />
    </g>
)

const WindLoads = () => (
    <g fill="none">
        <g stroke="#ff4dff" strokeWidth="0.6" opacity="0.75">
            {range(80).map(i => <path key={i} d={`M460 ${136 + i * 2}L478 ${142 + i * 2}`} />)}
            {range(13).map(i => (
                <path key={i} d={`M${461 + i * 5} ${134 - 9 * Math.sin(Math.PI * i / 24)}l18 7`} />
            ))}
        </g>
        <path d="M477.500 139V305" stroke="#ff1aff" strokeWidth="5" />
        <path d="M478 139Q484 131 500 129" stroke="#ff1aff" strokeWidth="2" strokeDasharray="3 3" />
        <path d="M482 148V306M486 151V307" stroke="#ff1aff" strokeWidth="3" strokeDasharray="2 3" />
        <g stroke="#1f701f" strokeWidth="0.7">
            {range(18).map(i => {
                const a = Math.PI / 2 * i / 17
                const x = 460 - 49 * Math.sin(a)
                const y = 302 - 34 * Math.cos(a)
                const end = 479 - 22 * i / 17
                return <path key={i} d={`M${x} ${y}L${end} ${y + (end - x) * 0.36}`} />
            })}
            {range(18).map(i => (
                <path key={i} d={`M${452 - i * 2} ${273 + i * 1.500}L${478 - i} ${283 + i * 2}`} />
            ))}
            {range(34).map(i => (
                <path key={i} d={`M${411 + (i % 3)} ${304 + i * 2.500}L456 ${320 + i * 2.500}`} />
            ))}
            {range(10).map(i => (
                <path key={i} d={`M${413 - i} ${384 + i * 1.500}L${454 - i * 1.500} ${402 + i}`} opacity="0.6" />
            ))}
        </g>
        <path d="M475 301L457 320V404L449 414" stroke="#0b5a1b" strokeWidth="2" strokeDasharray="3 2" />
        <path d="M462 308L486 317M460 314L485 323M458 319L483 329M466 304L488 312" stroke="#0b5a1b" strokeWidth="1.500" strokeDasharray="3 1" />
    </g>
)

const Support = ({ x, y }) => (
    <g fill="none" transform={`translate(${x} ${y})`}>
        <path d="M0 3L3 9H-3Z" fill="#22e022" stroke="#0bb00b" strokeWidth="0.5" />
        <path d="M-2 12H2V16H-2ZM-2 18H2V22" stroke="#7be07b" strokeWidth="0.8" />
        <path d="M-7 -3L-1 0L-7 3Z" fill="#f03030" />
        <path d="M-15 -6V0H-12M-10 -5V1H-7" stroke="#f06060" strokeWidth="0.8" />
        <path d="M2 1L8 -2L7 3Z" fill="#4040f0" />
        <path d="M9 -1L13 -4V0L17 -4" stroke="#7a7af0" strokeWidth="0.8" />
    </g>
)

const Triad = () => (
    <g>
        <path d="M304 492V470" stroke="#1adb1a" strokeWidth="3" />
        <path d="M304 455L308 472H300Z" fill="url(#tipGreen)" />
        <path d="M304 492L290 498" stroke="#1616e8" strokeWidth="3" />
        <path d="M275 503L287 495L290 501Z" fill="#3a3af0" />
        <path d="M304 492L318 497" stroke="#e01616" strokeWidth="3" />
        <path d="M333 503L317 500L320 495Z" fill="#e83a3a" />
        <circle cx="304" cy="492" r="3" fill="#c04a16" />
        <path d="M294 471L297 474L293 475M297 474H299" stroke="#3ad83a" fill="none" />
        <path d="M319 484L322 492M322 484L318 492" stroke="#e86060" fill="none" />
        <path d="M292 500L296 502L297 505" stroke="#5a5af0" fill="none" />
    </g>
)

const Compass = () => (
    <g fill="none" strokeWidth="1.500">
        <path d="M717 156V146" stroke="#1ab81a" />
        <path d="M717 143L719 150H715Z" fill="#1adb1a" />
        <path d="M717 141V134" stroke="#a8dca8" />
        <path d="M717 156L706 160" stroke="#1616e8" />
        <path d="M701 163L707 158L708 161Z" fill="#3a3af0" />
        <path d="M717 156L728 160" stroke="#e01616" />
        <path d="M734 163L727 161L728 158Z" fill="#f03030" />
    </g>
)

const ModelSvg = styled.svg`
    flex: 1;
    min-width: 0;
    height: 100%;
    text{
        font-family: "Liberation Sans", Arial, sans-serif;
        fill: #8c8c8c;
    }
`

const ModelView = () => (
    <ModelSvg viewBox="261 108 482 426" role="img" aria-label="Finite element model">
        <defs>
            <clipPath id="tower"><path d="M480 142V302Q516 328 552 296V142Z" /></clipPath>
            <clipPath id="leftFace"><path d="M456 322L516 346V511L452 487L430 455V431L443 409L456 405Z" /></clipPath>
            <clipPath id="rightFace"><path d="M516 346L576 322V459L555 478L516 493Z" /></clipPath>
            <clipPath id="shoulder"><path d="M480 300L456 322L516 346L576 322L552 294Q516 328 480 302Z" /></clipPath>
            <linearGradient id="tipGreen" x1="0" y1="0" x2="0" y2="1">
                <stop offset="0" stopColor="#c8f5c8" />
                <stop offset="1" stopColor="#0ad20a" />
            </linearGradient>
        </defs>
        <path d="M576 459V489L555 478Z" fill="#c2c6c6" />
        <path d={body} fill="#048787" />
        <path d="M516 480L576 459L555 478L516 493Z" fill="#0a7070" opacity="0.5" />
        <Mesh />
        <ellipse cx="516" cy="143" rx="36" ry="14" fill="#c0c0c0" stroke="#35c4c4" />
        <path d="M485 143V136M492 150V133M500 152V131M508 155V130M516 156V129M524 156V130M532 155V131M540 152V134M547 149V137M485 137H546M482 143H550M486 150H546" stroke="#6fd6d6" strokeWidth="0.600" fill="none" />
        <path d="M535 132V155M538 134V153" stroke="#ff1aff" strokeWidth="2" strokeDasharray="2 4" />
        <path d="M498 136V152M508 133V156M524 134V156" stroke="#f07af0" strokeDasharray="1 5" />
        <WindLoads />
        <path d="M516 511L541 474M549 474L576 489" stroke="#8a8a8a" strokeWidth="0.800" />
        <path d="M541 474L537 476L541 478ZM548 473L553 473L551 477Z" fill="#2a5ab0" />
        <Support x={456} y={489} />
        <Support x={516} y={512} />
        <Support x={575} y={489} />
        <Triad />
        <Compass />
        <text x="735" y="121" fontSize="14" textAnchor="end">MICROSTRUCT</text>
        <g fontSize="8" textAnchor="middle">
            <text x="392" y="527">0.0</text>
            <text x="464" y="527">339.8</text>
            <text x="500" y="527">in</text>
            <text x="536" y="527">679.7</text>
            <text x="609" y="527">1019.5</text>
        </g>
        <rect x="393" y="529" width="218" height="3" fill="#fff" stroke="#ddd" strokeWidth="0.500" />
        <rect x="466" y="529" width="73" height="4" fill="#c9c9c9" />
    </ModelSvg>
)

const CenterStyled = styled.section`
    display: flex;
    flex: 1;
    min-width: 0;
    background: #f3f3f3;
`
const Gutter = styled.div`
    display: flex;
    flex-direction: column;
    justify-content: center;
    width: 4px;
    flex: none;
    background: #efefef;
`
const ViewTools = styled.div`
    display: flex;
    flex-direction: column;
    width: 18px;
    flex: none;
    padding: 1px 0 11px;
    background: #fafafa;
`
const ViewTool = styled.button`
    display: grid;
    place-items: center;
    flex: 1 1 0;
    border-bottom: 1px solid #fff;
    background: ${p => p.$on ? 'var(--lavender)' : 'var(--panel)'};
`
const Canvas = styled.div`
    display: flex;
    flex: 1;
    min-width: 0;
    background: #fff;
`
const CoordBar = styled.div`
    display: flex;
    align-items: center;
    height: 17px;
    flex: none;
    background: var(--panel);
`
const CoordIcon = styled.span`
    display: grid;
    place-items: center;
    width: ${p => p.$width}px;
`
const CoordField = styled.label`
    display: flex;
    align-items: center;
    justify-content: flex-end;
    gap: 6px;
    width: 17px;
    padding-right: 5px;
`
const CoordInput = styled.input`
    width: 52px;
    height: 13px;
    margin-right: 5px;
    padding: 0 2px;
    background: #fff;
    text-align: ${p => p.$right ? 'right' : 'left'};
    color: ${p => p.$right ? '#2a2ae0' : 'var(--ink)'};
`
const Grow = styled.div`
    flex: 1;
`
const Messager = styled.div`
    display: flex;
    align-items: center;
    gap: 4px;
    height: 18px;
    flex: none;
    padding-left: 1px;
    background: #fff;
    color: var(--blue);
`

const viewTools = [
    'zoomFit', 'zoomArea', 'zoomIn', 'zoomOut', 'cube', 'cubeActive', 'cubeTop', 'cubeBottom', 'cubeLeft',
    'cubeRight', 'cubeFront', 'cubeBack', 'viewSave', 'viewFind', 'search', 'zoomDyn', 'pan', 'orbit',
    'film', 'rings', 'nodeRing', 'nodeRingOn',
]

const Center = () => {
    const [coords, setCoords] = useState({ x: '0.000', y: '0.000', d: '0.000' })
    const change = key => e => setCoords({ ...coords, [key]: e.target.value })

    return (
        <CenterStyled>
            <Gutter><Handle $upright /></Gutter>
            <Column>
                <Split>
                    <ViewTools>
                        {viewTools.map(name => (
                            <ViewTool key={name} aria-label={name} $on={name === 'cubeActive'}>
                                <Icon name={name} size={10} />
                            </ViewTool>
                        ))}
                    </ViewTools>
                    <Canvas><ModelView /></Canvas>
                    <ScrollTrack>
                        <Icon name="caretUp" size={6} />
                        <TrackSpace $grow={92} />
                        <Thumb $grow={214} />
                        <TrackSpace $grow={105} />
                        <Icon name="caretDown" size={6} />
                    </ScrollTrack>
                </Split>
                <ScrollTrack $row>
                    <TrackSpace $grow={20} />
                    <Icon name="caretLeft" size={6} />
                    <TrackSpace $grow={18} />
                    <Thumb $grow={355} />
                    <TrackSpace $grow={93} />
                    <Icon name="caretRight" size={6} />
                    <TrackSpace $grow={8} />
                </ScrollTrack>
                <CoordBar>
                    <CoordIcon $width={20}><Icon name="dofs" size={8} /></CoordIcon>
                    <CoordIcon $width={26}><Icon name="snap" size={11} /></CoordIcon>
                    <TickBox $plain aria-label="Lock x" />
                    <CoordField htmlFor="cx">x</CoordField>
                    <CoordInput id="cx" value={coords.x} onChange={change('x')} />
                    <TickBox $plain aria-label="Lock y" />
                    <CoordField htmlFor="cy">y</CoordField>
                    <CoordInput id="cy" value={coords.y} onChange={change('y')} />
                    <TickBox $plain aria-label="Lock distance" />
                    <CoordField htmlFor="cd" aria-label="Distance"><Icon name="nodeArrow" size={10} /></CoordField>
                    <CoordInput id="cd" $right value={coords.d} onChange={change('d')} />
                    <Grow />
                    <Stacked $width={30}>TRANS.<small>SPACE</small></Stacked>
                    <CoordIcon $width={18}><Icon name="bend" size={9} /></CoordIcon>
                    <Stacked $width={30}>ALTER<small>VIEW</small></Stacked>
                    <Stacked $width={30}>PIVOT<small>VIEW</small></Stacked>
                    <Stacked $width={36}>UNSEL.<small>ALL</small></Stacked>
                </CoordBar>
                <Handle $pale />
                <Messager><Icon name="ringDown" size={12} />Messager</Messager>
            </Column>
            <Gutter><Handle $upright /></Gutter>
        </CenterStyled>
    )
}

/* ---------- explorer ---------- */

const LoadTools = styled.div`
    display: flex;
    height: 19px;
    flex: none;
    margin: 1px 0;
    background: var(--panel);
`
const TreeList = styled.ul`
    list-style: none;
    margin: 0;
    padding: 1px 0 0;
    flex: 1;
`
const TreeRow = styled.li`
    display: flex;
    align-items: center;
    gap: 1px;
    height: ${p => p.$depth === 1 ? 11 : 10}px;
    padding-left: ${p => [4, 14, 29][p.$depth]}px;
    white-space: pre;
    font-size: 7px;
    line-height: 10px;
    font-weight: ${p => p.$depth === 0 ? 700 : 400};
    ${p => p.$picked && css`
        border: 2px solid #3a3af0;
        border-width: 0 2px;
        padding-left: 27px;
    `}
`
const Expander = styled.button`
    width: 7px;
    height: 7px;
    flex: none;
    font-size: 7px;
    line-height: 5px;
    font-weight: 700;
    border: ${p => p.$hidden ? '0' : '1px solid #b0b0b0'};
`
const PBadge = styled.span`
    width: 9px;
    height: 10px;
    text-align: center;
    font-weight: 600;
    color: #fff;
    background: var(--blue);
`
const ChartBadge = styled.span`
    width: 9px;
    height: 10px;
    display: grid;
    place-items: center;
    background: #cfcfcf;
`
const GreenBar = styled.span`
    width: 5px;
    height: 10px;
    background: #0a7d0a;
`
const LeafText = styled.span`
    color: #2f7d2f;
    font-weight: 600;
    background: ${p => p.$picked ? '#858585' : 'transparent'};
`
const Tone = styled.span`
    color: ${p => p.$color};
    font-weight: ${p => p.$bold ? 700 : p.$semi ? 600 : 400};
    font-style: ${p => p.$italic ? 'italic' : 'normal'};
    background: ${p => p.$back || 'transparent'};
`
const DescriptionArea = styled.div`
    height: 49px;
    flex: none;
`
const FootBar = styled.div`
    display: flex;
    align-items: center;
    gap: 10px;
    height: 18px;
    flex: none;
    padding-left: 5px;
    background: var(--panel);
    color: var(--navy);
    font-size: 7px;
    font-weight: 600;
`
const InfoLoad = styled.button`
    margin-left: auto;
    width: 24px;
    height: 15px;
    font-size: 5px;
    line-height: 7px;
    color: #ececec;
    background: #c9c9c9;
    white-space: normal;
`

const loadcases = [
    { id: 1, name: 'D', count: 0, gravity: true },
    {
        id: 2, name: 'L', count: 3, loads: [
            { axis: 'Y', value: '-8.400', unit: 'kipf' },
            { axis: 'Y', value: '-12.200', unit: 'kipf' },
            { axis: 'Y', value: '-0.050', unit: 'ksf', target: 'Plate04' },
        ]
    },
    { id: 51, name: 'S', count: 3 },
    { id: 61, name: 'P1(+)', count: 1 },
    { id: 62, name: 'P2(+)', count: 1 },
    { id: 63, name: 'P(-)', count: 1 },
    {
        id: 101, name: 'WX(+)', count: 2, loads: [
            { axis: 'X', value: '0.012', unit: 'ksf', target: 'Plate04', picked: true },
            { axis: 'X', value: '0.028', unit: 'ksf', target: 'Plate04' },
        ]
    },
    { id: 102, name: 'WX(-)', count: 2 },
    { id: 103, name: 'WZ(+)', count: 2 },
    { id: 104, name: 'WZ(-)', count: 2 },
    { id: 201, name: 'SX(+)', count: 17 },
    { id: 202, name: 'SX(-)', count: 17 },
    { id: 203, name: 'SZ(+)', count: 17 },
    { id: 204, name: 'SZ(-)', count: 17 },
    { id: 205, name: 'SV(-)', count: 0, gravity: true },
]

const Count = ({ n }) => <>[<Tone $color="var(--blue)">{n}</Tone>]</>

const Root = ({ label, n, sign }) => (
    <TreeRow $depth={0}>
        <Expander $hidden={!sign} aria-label={label}>{sign}</Expander>
        <span>{label} <Tone><Count n={n} /></Tone></span>
    </TreeRow>
)

const Leaf = ({ load }) => (
    <TreeRow $depth={2} $picked={load.picked}>
        <GreenBar />
        <LeafText $picked={load.picked}>
            [<Tone $color="var(--blue)" $semi>W</Tone>][<Tone $color="#10107c" $bold>{load.axis}</Tone>][
            <Tone $color="var(--navy)" $semi $back={load.picked && '#fff'}>{'  ' + load.value + '  '}</Tone>
            ][<Tone $color="#10107c" $bold>{load.unit}</Tone>
            {load.target
                ? <>]@[<Tone $color="#9a35d0" $bold>{load.target}</Tone>]</>
                : <>](<Tone $color="var(--blue)" $semi>•</Tone>)</>
            }
        </LeafText>
    </TreeRow>
)

const Loadcase = ({ item }) => {
    const hasRows = item.count > 0
    return (
        <>
            <TreeRow $depth={1}>
                <Expander $hidden={!hasRows} aria-label={item.name}>{hasRows ? (item.loads ? '−' : '+') : ''}</Expander>
                <PBadge>P</PBadge>
                <ChartBadge><Icon name="chart" size={8} /></ChartBadge>
                <span>
                    <Count n={item.id} />[<Tone $color="#2f7d2f">{' ' + item.name + ' '}</Tone>]
                    {item.gravity && <Tone $color="#a03030" $italic>(g)</Tone>}
                    <Count n={item.count} />
                </span>
            </TreeRow>
            {item.loads && item.loads.map((load, i) => <Leaf key={i} load={load} />)}
        </>
    )
}

const sideTools = ['exchange', 'stretch', 'plus', 'pencil', 'cross', 'turnUp', 'turnDown']

const ExplorerPanel = () => (
    <SidePanel $width={254}>
        <Tabs items={[['Preprocessor', 'on'], ['Postprocessor', 'grey'], ['Designer', 'grey'], ['Whiteboard', 'cream']]} gap={4} pad="0 3px" />
        <Frame $outer $pad="3px 1px 0">
            <Tabs small items={[['Setting'], ['Data'], ['Aligner'], ['Explorer', 'on'], ['Manager'], ['Spec.']]} gap={4} pad="0 2px" tall />
            <Frame $pad="3px 1px 0">
                <Tabs small items={[['Section'], ['Constant'], ['Material'], ['Load', 'on'], ['Boundary'], ['Constraint']]} gap={4} pad="0 2px" />
                <Frame $pad="0 1px">
                    <LoadTools>
                        <CoordIcon $width={20}><Icon name="lock" size={9} /></CoordIcon>
                        <CoordIcon $width={22}><Icon name="down" size={9} /></CoordIcon>
                        <CoordIcon $width={22}><Icon name="up" size={9} /></CoordIcon>
                        <CoordIcon $width={21}><Icon name="list" size={9} /></CoordIcon>
                        <Stacked $width={22}>Auto<small>SCALE</small></Stacked>
                        <Stacked $width={22} $on>2X<small>SCALE</small></Stacked>
                        <Stacked $width={22}>0.5X<small>SCALE</small></Stacked>
                        <Stacked $width={30} $on>INACTIVE<small>VIEW</small></Stacked>
                        <Stacked $width={32}>EXCLUSIVE<small>VIEW</small></Stacked>
                    </LoadTools>
                    <Split>
                        <Strip $width={19}>
                            {sideTools.map((name, i) => (
                                <StripButton key={name} aria-label={name}><Icon name={name} size={9} /><small>{i}</small></StripButton>
                            ))}
                        </Strip>
                        <Column>
                            <TreeList>
                                <Root label="REFERENCES" n={0} />
                                <Root label="LOADCASES" n={15} sign="−" />
                                {loadcases.map(item => <Loadcase key={item.id} item={item} />)}
                                <Root label="COMBINATIONS" n={232} sign="+" />
                                <Root label="ENVELOPES" n={0} />
                            </TreeList>
                            <Handle $pale />
                            <InfoLabel>Description</InfoLabel>
                            <DescriptionArea />
                        </Column>
                    </Split>
                    <FootBar>
                        <Icon name="force" size={10} />
                        (Plate04) Uniform Force
                        <InfoLoad>INFO LOAD</InfoLoad>
                    </FootBar>
                </Frame>
            </Frame>
        </Frame>
    </SidePanel>
)

/* ---------- status bar ---------- */

const StatusStyled = styled.footer`
    display: flex;
    align-items: center;
    height: 19px;
    flex: none;
    background: var(--panel);
    padding: 0 4px;
`
const StatusMessage = styled.p`
    margin: 0;
    flex: 1;
    font-weight: 600;
    color: var(--blue);
    em{
        margin-left: 4px;
        color: #f02020;
    }
`
const UnitCell = styled.span`
    width: 30px;
    text-align: center;
    color: ${p => p.$value ? 'var(--blue)' : 'var(--brown)'};
    font-weight: ${p => p.$bold ? 700 : 400};
`

const units = [['[Length]', 'FT'], ['[Mass]', 'KIPM'], ['[Time]', 'S'], ['[Angle]', 'RAD']]

const StatusBar = () => (
    <StatusStyled>
        <StatusMessage>MESSAGE: <em>Unselect all elements!</em></StatusMessage>
        <CoordIcon $width={25}><Icon name="spread" size={11} /></CoordIcon>
        <CoordIcon $width={25}><Icon name="ucs" size={12} /></CoordIcon>
        <DropDown label="Selection set" width={95} height={17} />
        <CoordIcon $width={25}><Icon name="ruler" size={14} /></CoordIcon>
        <DropDown label="Units" width={95} height={17} options={['1 : [S] / [FT] / [KIPM]']} />
        {units.map(([label, value]) => (
            <React.Fragment key={label}>
                <UnitCell>{label}</UnitCell>
                <UnitCell $value>{value}</UnitCell>
            </React.Fragment>
        ))}
        <UnitCell $bold>KEYS</UnitCell>
    </StatusStyled>
)

const App = () => (
    <PageStyled>
        <GlobalStyle />
        <QuickBar>
            {quickItems.map(([name, slim, rule, on]) => (
                <QuickButton key={name} aria-label={name} $slim={slim} $rule={rule} $on={on}>
                    <Icon name={name} size={10} />
                </QuickButton>
            ))}
            <Account>1xz5@queensu.ca</Account>
        </QuickBar>
        <Tabs items={menuItems} gap={5} pad="1px 4px 0" wide tall />
        <Ribbon />
        <MainStyled>
            <Rail><Icon name="ringLeft" size={12} /><span>Behavior</span></Rail>
            <ModelerPanel />
            <Center />
            <ExplorerPanel />
            <Rail $right><Icon name="ringRight" size={12} /><span>Explorer</span></Rail>
        </MainStyled>
        <StatusBar />
    </PageStyled>
)

export default App;
